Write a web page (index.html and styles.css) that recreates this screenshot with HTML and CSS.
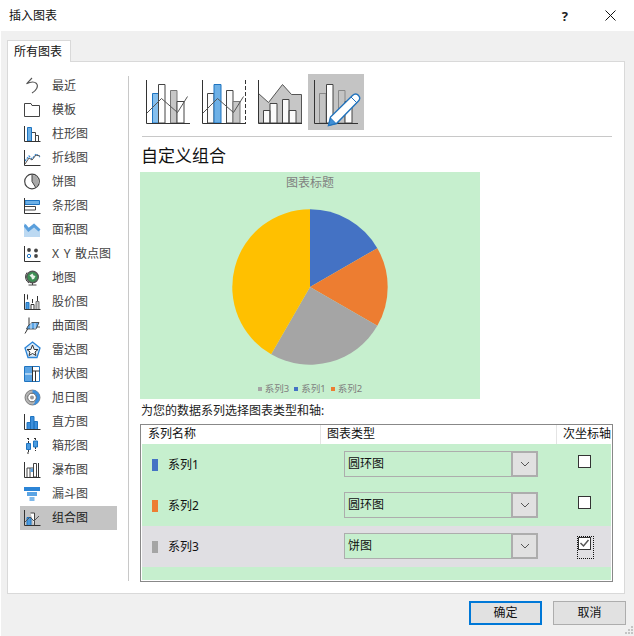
FILE: index.html
```html
<!DOCTYPE html>
<html lang="zh">
<head>
<meta charset="utf-8">
<title>插入图表</title>
<link rel="stylesheet" href="styles.css">
</head>
<body>
<div class="dialog">
  <header class="titlebar">
    <span class="title">插入图表</span>
    <span class="help">?</span>
    <svg class="close" width="11" height="11" viewBox="0 0 11 11"><path d="M.5.5l10 10M10.500.5l-10 10" stroke="#111" fill="none"/></svg>
  </header>
  <div class="content">
    <div class="tab">所有图表</div>
    <div class="panel">
      <nav class="sidebar">
        <div class="item"><svg class="ico" viewBox="0 0 17 18"><path d="M8 1L2.500 6.800C6 5 10 4 12.500 6.500C15 9.500 12 13.500 8 16" fill="none" stroke="#555" stroke-width="1.100"/></svg><span>最近</span></div>
        <div class="item"><svg class="ico" viewBox="0 0 17 18"><path d="M.5 2.500H7L8 4.500H15.500V15.500H.5Z" fill="#fff" stroke="#444"/></svg><span>模板</span></div>
        <div class="item"><svg class="ico" viewBox="0 0 17 18"><path d="M3.500 2.500h4v13.500h-4z" fill="#6db0e6" stroke="#1f74c0"/><path d="M8 7.500h3.500v8.500M11.500 10.500h3v5.500" fill="none" stroke="#444"/><path d="M.5 1v15.500h16" fill="none" stroke="#333"/></svg><span>柱形图</span></div>
        <div class="item"><svg class="ico" viewBox="0 0 17 18"><path d="M1 12l4-5 3 3 4-5 4 3" fill="none" stroke="#3a8ad6" stroke-width="1.300" stroke-dasharray="2 1"/><path d="M1 15l4-6 3 2 4-5 4 1" fill="none" stroke="#555"/><path d="M.5 1v15.500h16" fill="none" stroke="#333"/></svg><span>折线图</span></div>
        <div class="item"><svg class="ico" viewBox="0 0 17 18"><circle cx="8" cy="8.500" r="7.300" fill="#fff" stroke="#444" stroke-width="1.200"/><path d="M8 2a6.500 6.500 0 0 1 3.500 12L8 8.500Z" fill="#a9a9a9"/><path d="M8 1.500v7l3.700 6" fill="none" stroke="#444"/></svg><span>饼图</span></div>
        <div class="item"><svg class="ico" viewBox="0 0 17 18"><path d="M1 3.500h14.500v4H1z" fill="#6db0e6" stroke="#1f74c0"/><path d="M1 9.500h10.500v3.500H1" fill="none" stroke="#444"/><path d="M.5 1v15.500h16" fill="none" stroke="#333"/></svg><span>条形图</span></div>
        <div class="item"><svg class="ico" viewBox="0 0 17 18"><path d="M0 2L4.500 7L10 2.500L16 8V16H0Z" fill="#bcd9f2"/><path d="M.5 4L4.500 9L10 4.500L15.500 9.500" fill="none" stroke="#5a9fdc" stroke-width="3"/></svg><span>面积图</span></div>
        <div class="item"><svg class="ico" viewBox="0 0 17 18"><circle cx="5" cy="5" r="1.900" fill="#444"/><circle cx="12" cy="5.500" r="1.900" fill="#444"/><circle cx="5" cy="11" r="1.700" fill="#fff" stroke="#1f74c0"/><circle cx="12" cy="11" r="1.900" fill="#444"/><path d="M.5 1v15.500h16" fill="none" stroke="#333"/></svg><span>X Y 散点图</span></div>
        <div class="item"><svg class="ico" viewBox="0 0 17 18"><circle cx="8.500" cy="8" r="5.800" fill="#3d8f55" stroke="#555" stroke-width="1.400"/><path d="M5.500 6.500l3-2 1 2 2 .5-1.500 3-2 .5-.5-2z" fill="#e8f2e8"/><path d="M3 3.500a7 7 0 0 0 2 10.500M4.500 16h8M8.500 14v2" fill="none" stroke="#444"/></svg><span>地图</span></div>
        <div class="item"><svg class="ico" viewBox="0 0 17 18"><path d="M3.500 1.500v5M8.500 6v4M13.500 3v5" stroke="#333" fill="none"/><path d="M2 9.500h3v7H2z" fill="#4a9be0" stroke="#1f74c0"/><path d="M7 11.500h3v5H7z" fill="#fff" stroke="#333"/><path d="M12 8.500h3v8h-3z" fill="#c8c8c8" stroke="#777"/><path d="M.5 1v15.500h16" fill="none" stroke="#333"/></svg><span>股价图</span></div>
        <div class="item"><svg class="ico" viewBox="0 0 17 18"><path d="M5 .5v9L1 16.500" fill="none" stroke="#333"/><path d="M5 10h11" stroke="#555" fill="none"/><path d="M4 9L8 5.500h7L12 12H2.500Z" fill="#5ba4e4" stroke="#333" stroke-width=".8"/><path d="M7 6v6M11 6v6" stroke="#fff" stroke-width=".8" fill="none"/></svg><span>曲面图</span></div>
        <div class="item"><svg class="ico" viewBox="0 0 17 18"><path d="M8.500 1L16 7l-3 9.500H4L1 7Z" fill="#d8eafa" stroke="#2b84d6" stroke-width="1.300"/><path d="M8.500 4l1.700 4.500H14l-3 2.500 1 3.500-3.500-2-3.500 2 1-3.500-3-2.500h3.800z" fill="#fff" stroke="#333" stroke-width="1"/></svg><span>雷达图</span></div>
        <div class="item"><svg class="ico" viewBox="0 0 17 18"><path d="M.5 1.500h15v15H.5z" fill="#fff" stroke="#1f74c0"/><path d="M1 2h7v6.500H1zM1 9.500h7V16H1z" fill="#5ba4e4"/><path d="M8.500 1.500v15M8.500 6h7M11.500 6v10.500" stroke="#333" fill="none"/></svg><span>树状图</span></div>
        <div class="item"><svg class="ico" viewBox="0 0 17 18"><circle cx="8.500" cy="8.500" r="7.500" fill="#b5b5b5" stroke="#666" stroke-width=".8"/><path d="M8.500 1a7.500 7.500 0 0 1 0 15a5 5 0 0 0 2-7a5 5 0 0 0-2-3z" fill="#3d8fdc"/><circle cx="8" cy="8.500" r="4.300" fill="#fff" stroke="#666"/><circle cx="8" cy="8.500" r="2" fill="#999"/></svg><span>旭日图</span></div>
        <div class="item"><svg class="ico" viewBox="0 0 17 18"><path d="M3 9.500h3.500v7H3zM6.500 3.500H10v13H6.500zM10 8.500h3.500v8H10z" fill="#3d8fdc" stroke="#1f74c0"/><path d="M.5 1v15.500h16" fill="none" stroke="#333"/></svg><span>直方图</span></div>
        <div class="item"><svg class="ico" viewBox="0 0 17 18"><path d="M4.500 1v15M11.500 1v13M3 1.500h3M3 16h3M10 1.500h3" stroke="#333" fill="none" stroke-dasharray="2 1"/><path d="M2.500 6.500h4v6h-4zM9.500 4h4v6h-4z" fill="#4a9be0" stroke="#1f74c0"/></svg><span>箱形图</span></div>
        <div class="item"><svg class="ico" viewBox="0 0 17 18"><path d="M3 16V7h3v9M6 7h3.500v4M9.500 6V2.500h3V16h-3z" fill="none" stroke="#444"/><path d="M6.500 7.500H9V11H6.500z" fill="#5ba4e4"/><path d="M.5 1v15.500h16M14.500 2v14.500" fill="none" stroke="#333"/></svg><span>瀑布图</span></div>
        <div class="item"><svg class="ico" viewBox="0 0 17 18"><path d="M0 2h16v4H0z" fill="#2b84d6"/><path d="M3 7h10v4H3z" fill="#5ba4e4"/><path d="M5.500 12h5v4h-5z" fill="#7fb9ea"/></svg><span>漏斗图</span></div>
        <div class="item active"><svg class="ico" viewBox="0 0 17 18"><path d="M3 8.500h4v8H3z" fill="#4a9be0" stroke="#1f74c0"/><path d="M6.500 4h4v12.500" fill="#fff" stroke="#444"/><path d="M1 13l5-5 4 4 5-5" fill="none" stroke="#555"/><path d="M.5 1v15.500h16" fill="none" stroke="#333"/></svg><span>组合图</span></div>
      </nav>
      <div class="rule"></div>
      <main class="main">
        <div class="types">
          <div class="type">
            <svg width="56" height="56" viewBox="0 0 56 56"><path d="M12.500 19.500h6V49h-6z" fill="#85bfee" stroke="#1f74c0"/><path d="M18.500 10.500h6.500V49h-6.500z" fill="#fff" stroke="#444"/><path d="M30.500 16.500h6.500V49h-6.500z" fill="#c6c6c6" stroke="#777"/><path d="M37 27.500h7V49h-7z" fill="#fff" stroke="#444"/><path d="M6.500 39.500L21.500 24.500L37.500 38.500L47.500 22.500" fill="none" stroke="#555"/><path d="M6.500 6v43.500H50" fill="none" stroke="#333"/></svg>
          </div>
          <div class="type">
            <svg width="56" height="56" viewBox="0 0 56 56"><path d="M11.500 19.500h6.500V49h-6.500z" fill="#fafafa" stroke="#444"/><path d="M18 10.500h7V49h-7z" fill="#6db0e6" stroke="#1f74c0"/><path d="M30.500 16.500h6.500V49h-6.500z" fill="#fafafa" stroke="#444"/><path d="M37 27.500h7V49h-7z" fill="#c6c6c6" stroke="#777"/><path d="M6.500 39.500L21.500 24.500L37.500 38.500L47.500 22.500" fill="none" stroke="#555"/><path d="M6.500 6v43.500H50" fill="none" stroke="#333"/><path d="M49.500 6v43" fill="none" stroke="#333" stroke-dasharray="4 2"/></svg>
          </div>
          <div class="type">
            <svg width="56" height="56" viewBox="0 0 56 56"><path d="M6.500 19.500L16.500 28.500L30.500 10.500L39.500 20.500H49.500V49H6.500Z" fill="#c6c6c6" stroke="#555"/><path d="M11.500 36.500h6.500V49h-6.500zM18 29.500h7V49h-7zM30.500 25.500h6.500V49h-6.500zM37 36.500h7V49h-7z" fill="#fafafa" stroke="#444"/><path d="M6.500 6v43.500H50" fill="none" stroke="#333"/></svg>
          </div>
          <div class="type selected">
            <svg width="56" height="56" viewBox="0 0 56 56"><path d="M11.500 19.500h6.500V49h-6.500zM30.500 16.500h6.500V49h-6.500z" fill="none" stroke="#888"/><path d="M18.500 10.500h6.500V49h-6.500zM37 27.500h7V49h-7z" fill="#fff" stroke="#444"/><path d="M6.500 6v43.500H50" fill="none" stroke="#333"/><path d="M20.500 51.500L22.500 43L44.500 21.500C46.500 19.500 49 19.500 50.500 21.500C52 23 52 25.500 50 27.500L28.500 49.500Z" fill="#fff" stroke="#2273bd" stroke-width="1.400"/><path d="M20.500 51.500L22.500 44L28 49.500Z" fill="#3f8fd6" stroke="#2273bd"/><path d="M43 23L49 29" stroke="#2273bd" fill="none"/></svg>
          </div>
        </div>
        <div class="hr"></div>
        <h1 class="heading">自定义组合</h1>
        <section class="chart">
          <div class="chart-title">图表标题</div>
          <svg class="pie" width="156" height="156" viewBox="0 0 156 156">
            <path d="M78 78V.3A77.700 77.700 0 0 1 145.300 39.150Z" fill="#4472c4"/>
            <path d="M78 78L145.300 39.150A77.700 77.700 0 0 1 145.300 116.850Z" fill="#ed7d31"/>
            <path d="M78 78L145.300 116.850A77.700 77.700 0 0 1 39.150 145.300Z" fill="#a5a5a5"/>
            <path d="M78 78L39.150 145.300A77.700 77.700 0 0 1 78 .3Z" fill="#ffc000"/>
          </svg>
          <div class="legend">
            <span class="key"><i class="dot gray"></i>系列3</span>
            <span class="key"><i class="dot blue"></i>系列1</span>
            <span class="key"><i class="dot orange"></i>系列2</span>
          </div>
        </section>
        <p class="prompt">为您的数据系列选择图表类型和轴:</p>
        <section class="table">
          <div class="thead">
            <div class="th th-name">系列名称</div>
            <div class="th th-type">图表类型</div>
            <div class="th th-axis">次坐标轴</div>
          </div>
          <div class="tbody">
            <div class="row">
              <div class="name"><i class="swatch blue"></i>系列1</div>
              <div class="select"><span class="value">圆环图</span><span class="arrow"><svg width="10" height="6" viewBox="0 0 10 6"><path d="M1 1l4 4 4-4" fill="none" stroke="#555"/></svg></span></div>
              <div class="check"></div>
            </div>
            <div class="row">
              <div class="name"><i class="swatch orange"></i>系列2</div>
              <div class="select"><span class="value">圆环图</span><span class="arrow"><svg width="10" height="6" viewBox="0 0 10 6"><path d="M1 1l4 4 4-4" fill="none" stroke="#555"/></svg></span></div>
              <div class="check"></div>
            </div>
            <div class="row current">
              <div class="name"><i class="swatch gray"></i>系列3</div>
              <div class="select"><span class="value">饼图</span><span class="arrow"><svg width="10" height="6" viewBox="0 0 10 6"><path d="M1 1l4 4 4-4" fill="none" stroke="#555"/></svg></span></div>
              <div class="check focus"><svg width="11" height="11" viewBox="0 0 11 11"><path d="M1.500 5l3 3 5-6" fill="none" stroke="#555" stroke-width="1.500"/></svg></div>
            </div>
          </div>
        </section>
      </main>
    </div>
    <footer class="footer">
      <button class="btn primary">确定</button>
      <button class="btn">取消</button>
    </footer>
  </div>
  <svg class="grip" width="9" height="9" viewBox="0 0 9 9"><path d="M6 0h2v2H6zM3 3h2v2H3zM6 3h2v2H6zM0 6h2v2H0zM3 6h2v2H3zM6 6h2v2H6z" fill="#c4c4c4"/></svg>
</div>
</body>
</html>
```

FILE: styles.css
```css
* { box-sizing: border-box; }
html, body { margin: 0; padding: 0; }
body {
  width: 634px;
  height: 636px;
  overflow: hidden;
  font: 12px/16px "Noto Sans", "Noto Sans CJK SC", sans-serif;
  color: #000;
  background: #fff;
}
.dialog { position: relative; width: 634px; height: 636px; display: flex; flex-direction: column; background: #fff; }
.titlebar { height: 31px; flex: none; display: flex; align-items: center; padding-left: 9px; }
.title { font-size: 12px; color: #111; }
.help { margin-left: auto; margin-right: 37px; font-size: 13px; font-weight: 700; color: #222; }
.close { margin-right: 18px; }
.content { flex: 1; margin-left: 1px; background: #f0f0f0; padding: 9px 9px 0 6px; }
.tab {
  position: relative;
  z-index: 1;
  width: 64px;
  height: 22px;
  margin-bottom: -1px;
  padding: 3px 0 0 6px;
  background: #fff;
  border: 1px solid #d9d9d9;
  border-bottom: 0;
  color: #111;
}
.panel { height: 533px; display: flex; background: #fff; border: 1px solid #d9d9d9; }
.sidebar { width: 109px; flex: none; padding: 12px 0 0 12px; }
.item { width: 97px; height: 24px; display: flex; align-items: center; gap: 11px; padding-left: 4px; color: #444; word-spacing: 1.500px; }
.item.active { background: #c4c4c4; color: #222; }
.ico { width: 17px; height: 18px; flex: none; }
.rule { width: 1px; height: 505px; margin: 14px 0 0 11px; background: #c8c8c8; flex: none; }
.main { margin-left: 11px; width: 473px; flex: none; padding-top: 12px; }
.types { display: flex; height: 56px; }
.type { width: 56px; height: 56px; }
.type svg { display: block; }
.type.selected { background: #c4c4c4; }
.hr { height: 1px; margin: 6px 1px 0 2px; background: #c8c8c8; }
.heading { margin: 7px 0 0 1px; font-size: 17px; font-weight: 400; line-height: 24px; height: 28px; color: #111; }
.chart { width: 340px; height: 227px; padding-top: 3px; display: flex; flex-direction: column; align-items: center; background: #c6efce; }
.chart-title { height: 16px; font-size: 12px; line-height: 16px; color: #7f7f7f; }
.pie { margin-top: 18px; flex: none; }
.legend { margin-top: 17px; height: 14px; display: flex; gap: 5px; font-size: 9.500px; line-height: 14px; color: #7f7f7f; }
.key { display: flex; align-items: center; gap: 3px; }
.dot { width: 4px; height: 4px; }
.gray { background: #a5a5a5; }
.blue { background: #4472c4; }
.orange { background: #ed7d31; }
.prompt { margin: 4px 0 0 1px; height: 21px; line-height: 16px; color: #222; }
.table { width: 473px; height: 158px; border: 1px solid #888; padding: 0 1px 1px; background: #fff; }
.thead { height: 19px; display: flex; line-height: 18px; color: #111; }
.th { height: 19px; }
.th-name { width: 179px; padding-left: 6px; border-right: 1px solid #e4e4e4; }
.th-type { width: 236px; padding-left: 6px; border-right: 1px solid #e4e4e4; }
.th-axis { padding-left: 6px; white-space: nowrap; }
.tbody { height: 136px; background: #c6efce; }
.row { height: 41px; display: grid; grid-template-columns: 202px 194px 1fr; }
.row.current { background: #e0dfe3; }
.name { display: flex; align-items: center; gap: 10px; padding-left: 10px; color: #111; height: 41px; }
.swatch { width: 6px; height: 12px; }
.select { margin-top: 7px; height: 26px; display: flex; background: #c6efce; border: 1px solid #adadad; }
.value { flex: 1; padding: 4px 0 0 3px; color: #111; }
.arrow { width: 27px; margin: -1px -1px -1px 0; display: flex; align-items: center; justify-content: center; background: #e1e1e1; border: 2px solid #adadad; }
.check { position: relative; margin: 11px 0 0 40px; width: 13px; height: 13px; background: #fff; border: 1px solid #333; display: flex; align-items: center; justify-content: center; }
.check.focus::after { content: ""; position: absolute; left: -2px; top: -2px; width: 15px; height: 21px; border: 1px dotted #111; }
.footer { display: flex; justify-content: flex-end; gap: 11px; padding-top: 7px; margin-right: -1px; }
.btn { width: 73px; height: 24px; padding: 0; font: inherit; color: #111; background: #e1e1e1; border: 1px solid #adadad; }
.btn.primary { border: 2px solid #0078d7; }
.grip { position: absolute; right: 0; bottom: 1px; }
```
